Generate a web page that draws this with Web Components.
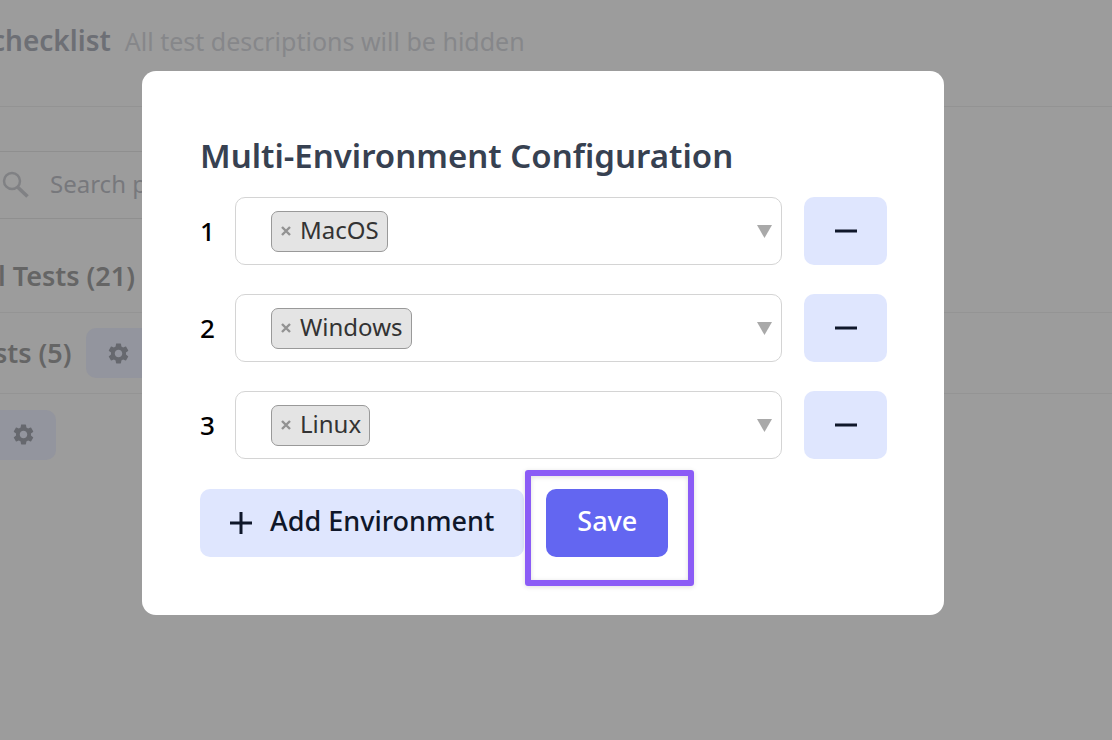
<!DOCTYPE html>
<html lang="en">
<head>
<meta charset="utf-8">
<title>Multi-Environment Configuration</title>
<style>
  html, body { margin: 0; min-height: 100%; }
  body {
    background: #9c9c9c;
    font-family: "Noto Sans", "Open Sans", sans-serif;
    overflow: hidden;
  }
</style>
</head>
<body>
<test-app></test-app>

<script>
const define = (name, html, setup) => {
  const template = document.createElement('template');
  template.innerHTML = html;
  customElements.define(name, class extends HTMLElement {
    constructor() {
      super();
      this.attachShadow({ mode: 'open' }).append(template.content.cloneNode(true));
    }
    connectedCallback() { if (setup) setup(this, this.shadowRoot); }
  });
};

define('gear-button', `
  <style>
    :host { display: block; }
    button {
      display: flex; align-items: center; justify-content: center;
      width: 65px; height: 50px; padding: 0; border: 0; border-radius: 10px;
      background: #93959e; color: #66686e;
    }
    svg { width: 25px; height: 25px; display: block; }
  </style>
  <button type="button" aria-label="Settings">
    <svg viewBox="0 0 24 24" fill="currentColor"><path d="M19.14 12.94c.04-.3.06-.61.06-.94 0-.32-.02-.64-.07-.94l2.03-1.58a.49.49 0 0 0 .12-.61l-1.92-3.32a.488.488 0 0 0-.59-.22l-2.39.96c-.5-.38-1.03-.7-1.62-.94l-.36-2.54a.484.484 0 0 0-.48-.41h-3.84c-.24 0-.43.17-.47.41l-.36 2.54c-.59.24-1.13.57-1.62.94l-2.39-.96c-.22-.08-.47 0-.59.22L2.74 8.87c-.12.21-.08.47.12.61l2.03 1.58c-.05.3-.09.63-.09.94s.02.64.07.94l-2.03 1.58a.49.49 0 0 0-.12.61l1.92 3.32c.12.22.37.29.59.22l2.39-.96c.5.38 1.03.7 1.62.94l.36 2.54c.05.24.24.41.48.41h3.84c.24 0 .44-.17.47-.41l.36-2.54c.59-.24 1.13-.56 1.62-.94l2.39.96c.22.08.47 0 .59-.22l1.92-3.32c.12-.22.07-.47-.12-.61l-2.01-1.58zM12 15.6c-1.98 0-3.6-1.62-3.6-3.6s1.62-3.6 3.6-3.6 3.6 1.62 3.6 3.6-1.62 3.6-3.6 3.6z"/></svg>
  </button>`);

define('checklist-page', `
  <style>
    :host { display: block; overflow: hidden; }
    header {
      display: flex; align-items: baseline; gap: 14px; box-sizing: border-box;
      height: 107px; padding-top: 20px; margin-left: -9px;
      border-bottom: 1px solid #939393; line-height: 40px; white-space: nowrap;
    }
    h1 { margin: 0; font-size: 28px; font-weight: 600; color: #6d6f75; }
    p { margin: 0; font-size: 25px; color: #86878a; }
    label {
      display: flex; align-items: center; gap: 20px; box-sizing: border-box;
      width: 60%; height: 68px; margin-top: 44px;
      border: solid #8f8f8f; border-width: 1px 0; color: #808184;
    }
    label svg { width: 30px; height: 30px; display: block; }
    input {
      flex: 1; min-width: 0; border: 0; padding: 0 0 2px; outline: 0; background: none;
      font: 24px/32px "Noto Sans", sans-serif; color: #77787c;
    }
    input::placeholder { color: #77787c; opacity: 1; }
    .row {
      display: flex; align-items: center; gap: 14px; box-sizing: border-box;
      height: 81px; border-bottom: 1px solid #949494; white-space: nowrap;
    }
    .row.all { height: 94px; padding-top: 20px; }
    .row.last { border: 0; }
    h2 { margin: 0; font-size: 27px; line-height: 36px; font-weight: 600; color: #656565; }
    .row.all h2 { margin-left: -2px; }
    .row.sub h2 { margin-left: -6px; }
    .row.last gear-button { margin-left: -9px; }
  </style>
  <header><h1>checklist</h1><p>All test descriptions will be hidden</p></header>
  <label>
    <svg viewBox="0 0 30 30" fill="none" stroke="currentColor"><circle cx="12" cy="11" r="8" stroke-width="2.500"/><path d="M17.500 17l10 9.500" stroke-width="3.600"/></svg>
    <input type="search" placeholder="Search p" aria-label="Search">
  </label>
  <div class="row all"><h2>l Tests (21)</h2></div>
  <div class="row sub"><h2>sts (5)</h2><gear-button></gear-button></div>
  <div class="row last"><gear-button></gear-button></div>`);

define('environment-row', `
  <style>
    :host { display: grid; grid-template-columns: 35px 1fr 83px; align-items: center; }
    .number { font-size: 26px; line-height: 36px; font-weight: 500; color: #000; }
    .field {
      display: grid; align-items: center; box-sizing: border-box; height: 68px;
      margin-right: 22px; border: 1px solid #d4d4d4; border-radius: 10px; background: #fff;
    }
    .field > * { grid-area: 1 / 1; }
    select {
      appearance: none; width: 100%; height: 66px; border: 0; padding: 0;
      border-radius: 10px; background: none; color: #333;
      font: 24px/32px "Noto Sans", sans-serif;
    }
    .chip {
      display: flex; align-items: center; gap: 9px; justify-self: start;
      box-sizing: border-box; height: 41px; margin-left: 35px; padding: 0 8px 0 9px;
      border: 1px solid #999; border-radius: 7px; background: #e4e4e4;
      color: #333; font-size: 24px; line-height: 36px; z-index: 1;
    }
    .chip button {
      display: block; width: 10px; height: 36px; padding: 0; border: 0; background: none; color: #929292;
    }
    .chip span { padding-bottom: 2px; }
    .chip svg { display: block; width: 10px; height: 10px; }
    .arrow { justify-self: end; width: 15px; height: 13px; margin-right: 9px; pointer-events: none; }
    .minus {
      display: flex; align-items: center; justify-content: center;
      width: 83px; height: 68px; padding: 0; border: 0; border-radius: 10px;
      background: #dfe6fe; color: #0f172a;
    }
    .minus svg { display: block; width: 22px; height: 4px; }
  </style>
  <label class="number" for="env"></label>
  <div class="field">
    <select id="env"><option></option></select>
    <div class="chip">
      <button type="button" aria-label="Remove"><svg viewBox="0 0 10 10" stroke="currentColor" stroke-width="2.400"><path d="M1 1l8 8M9 1l-8 8"/></svg></button>
      <span><slot></slot></span>
    </div>
    <svg class="arrow" viewBox="0 0 15 13"><path d="M0 0h15L7.500 13z" fill="#a9a9a9"/></svg>
  </div>
  <button class="minus" type="button" aria-label="Delete environment"><svg viewBox="0 0 22 4"><path d="M0 .5h22v3H0z" fill="currentColor"/></svg></button>`,
  (host, root) => { root.querySelector('.number').textContent = host.getAttribute('number'); });

define('environment-dialog', `
  <style>
    :host {
      display: block; box-sizing: border-box; padding: 58px 57px 58px 58px;
      border-radius: 14px; background: #fff;
    }
    h2 { margin: 0 0 14px; font-size: 33px; line-height: 54px; font-weight: 600; color: #374151; white-space: nowrap; }
    .rows { display: grid; gap: 29px; }
    .actions { display: flex; gap: 22px; margin-top: 30px; }
    button {
      display: flex; align-items: center; height: 68px; padding: 0 30px 4px; border: 0;
      border-radius: 10px; font: 500 27px/40px "Noto Sans", sans-serif; white-space: nowrap;
    }
    .add { gap: 18px; background: #dfe6fe; color: #0f172a; }
    .add svg { display: block; width: 22px; height: 22px; margin-top: 4px; }
    .save { padding: 0 31px 4px; background: #6366f1; color: #fff; }
    .spot { position: relative; }
    .ring {
      position: absolute; inset: -19px -26px -29px -21px; border: 6px solid #8b5cf6;
      border-radius: 3px; box-shadow: 0 1px 5px #0002, inset 0 1px 5px #0002; pointer-events: none;
    }
  </style>
  <h2>Multi-Environment Configuration</h2>
  <div class="rows">
    <environment-row number="1">MacOS</environment-row>
    <environment-row number="2">Windows</environment-row>
    <environment-row number="3">Linux</environment-row>
  </div>
  <div class="actions">
    <button class="add" type="button"><svg viewBox="0 0 22 22" stroke="currentColor" stroke-width="3"><path d="M11 0v22M0 11h22"/></svg>Add Environment</button>
    <div class="spot"><button class="save" type="button">Save</button><div class="ring"></div></div>
  </div>`);

define('test-app', `
  <style>
    :host { display: grid; grid-template-columns: minmax(0, 1fr); min-height: 100vh; }
    checklist-page, .layer { grid-area: 1 / 1; min-width: 0; }
    .layer { z-index: 1; padding: 71px 168px 71px 142px; }
  </style>
  <checklist-page></checklist-page>
  <div class="layer"><environment-dialog role="dialog" aria-label="Multi-Environment Configuration"></environment-dialog></div>`);
</script>
</body>
</html>
